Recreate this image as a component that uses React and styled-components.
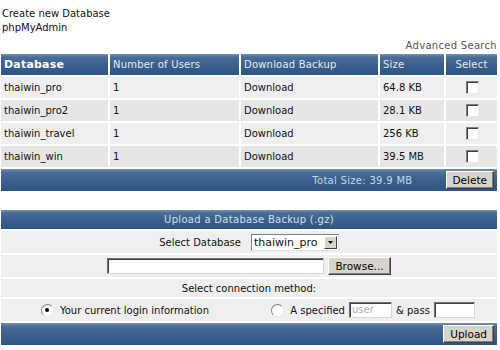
import React from "react";
import styled, { createGlobalStyle, css } from "styled-components";

const Global = createGlobalStyle`
  html, body {
    margin: 0;
    padding: 0;
    background: #fff;
  }
  body {
    font-family: "DejaVu Sans", Verdana, sans-serif;
    font-size: 10px;
    color: #111;
  }
`;

const rows = [
  { name: "thaiwin_pro", users: 1, size: "64.8 KB" },
  { name: "thaiwin_pro2", users: 1, size: "28.1 KB" },
  { name: "thaiwin_travel", users: 1, size: "256 KB" },
  { name: "thaiwin_win", users: 1, size: "39.5 MB" },
];

const App = () => (
  <Page>
    <Global />
    <Intro>
      <div>Create new Database</div>
      <div>phpMyAdmin</div>
    </Intro>
    <SearchLink>Advanced Search</SearchLink>

    <Grid>
      <Head bold>Database</Head>
      <Head>Number of Users</Head>
      <Head>Download Backup</Head>
      <Head>Size</Head>
      <Head center>Select</Head>
      {rows.map((r, i) => (
        <React.Fragment key={r.name}>
          <Cell alt={i % 2 === 1}>{r.name}</Cell>
          <Cell alt={i % 2 === 1}>{r.users}</Cell>
          <Cell alt={i % 2 === 1}>Download</Cell>
          <Cell alt={i % 2 === 1}>{r.size}</Cell>
          <Cell alt={i % 2 === 1} center>
            <Check />
          </Cell>
        </React.Fragment>
      ))}
      <Footer>
        <Total>Total Size: 39.9 MB</Total>
        <Button>Delete</Button>
      </Footer>
    </Grid>

    <Upload>
      <UploadHead>Upload a Database Backup (.gz)</UploadHead>
      <FormRow>
        <span>Select Database</span>
        <Select>
          <span>thaiwin_pro</span>
          <Arrow>
            <svg width="5" height="3" viewBox="0 0 5 3">
              <path d="M0 0h5L2.5 3z" fill="#000" />
            </svg>
          </Arrow>
        </Select>
      </FormRow>
      <FormRow>
        <TextBox width={217} />
        <Button>Browse...</Button>
      </FormRow>
      <FormRow short>Select connection method:</FormRow>
      <SplitRow>
        <Choice>
          <Radio checked />
          <span>Your current login information</span>
        </Choice>
        <Choice>
          <Radio />
          <span>A specified</span>
          <TextBox width={43} placeholder>user</TextBox>
          <span>&amp; pass</span>
          <TextBox width={41} />
        </Choice>
      </SplitRow>
      <Footer>
        <Button>Upload</Button>
      </Footer>
    </Upload>
  </Page>
);

export default App;

const Page = styled.div`
  width: 500px;
  padding: 7px 0 0 1px;
  box-sizing: border-box;
`;

const Intro = styled.div`
  padding-left: 1px;
  line-height: 14px;
`;

const SearchLink = styled.div`
  text-align: right;
  color: #555;
  padding-right: 3px;
  margin-top: 4px;
  line-height: 13px;
  letter-spacing: 0.3px;
`;

const Grid = styled.div`
  display: grid;
  grid-template-columns: 107px 129px 137px 64px 51px;
  gap: 2px;
  margin-top: 2px;
`;

const bar = css`
  background: linear-gradient(#7591b6 0%, #4a6d98 15%, #3a5f8c 55%, #2e5482 100%);
  color: #e4ebf4;
`;

const Head = styled.div`
  ${bar};
  height: 21px;
  line-height: 21px;
  padding: 0 3px;
  font-size: ${(p) => (p.bold ? "11px" : "10px")};
  font-weight: ${(p) => (p.bold ? "bold" : "normal")};
  color: ${(p) => (p.bold ? "#fff" : "#e4ebf4")};
  text-align: ${(p) => (p.center ? "center" : "left")};
  letter-spacing: 0.2px;
`;

const Cell = styled.div`
  height: 21px;
  line-height: 21px;
  padding: 0 3px;
  background: ${(p) => (p.alt ? "#e6e6e6" : "#efefef")};
  text-align: ${(p) => (p.center ? "center" : "left")};
  display: ${(p) => (p.center ? "flex" : "block")};
  align-items: center;
  justify-content: center;
`;

const Check = styled.span`
  width: 11px;
  height: 11px;
  background: #fff;
  border: 1px solid;
  border-color: #808080 #e8e8e8 #e8e8e8 #808080;
  box-shadow: inset 1px 1px 0 #404040;
  margin-left: 2px;
`;

const Footer = styled.div`
  ${bar};
  grid-column: 1 / -1;
  height: 22px;
  display: flex;
  align-items: center;
  justify-content: flex-end;
  padding-right: 3px;
  gap: 33px;
`;

const Total = styled.span`
  color: #c9d6e6;
  font-size: 10px;
  letter-spacing: 0.3px;
`;

const Button = styled.button`
  font-family: "DejaVu Sans", Verdana, sans-serif;
  font-size: 10.5px;
  color: #000;
  height: 18px;
  margin: 0;
  padding: 0 6px;
  background: #d8d4cc;
  border: 1px solid;
  border-color: #fff #404040 #404040 #fff;
  box-shadow: inset -1px -1px 0 #808080;
  border-radius: 0;
`;

const Upload = styled.div`
  display: grid;
  gap: 2px;
  width: 496px;
  margin-top: 19px;
`;

const UploadHead = styled.div`
  ${bar};
  height: 19px;
  line-height: 19px;
  text-align: center;
  color: #d6e0ec;
  letter-spacing: 0.3px;
`;

const FormRow = styled.div`
  background: #efefef;
  height: ${(p) => (p.short ? "18px" : "22px")};
  display: flex;
  align-items: center;
  justify-content: center;
  gap: 4px;
`;

const Select = styled.div`
  width: 88px;
  height: 17px;
  box-sizing: border-box;
  border: 1px solid;
  border-color: #808080 #e0e0e0 #e0e0e0 #808080;
  background: #fff;
  display: flex;
  align-items: center;
  justify-content: space-between;
  padding-left: 2px;
  margin-left: 6px;
  font-size: 11px;
`;

const Arrow = styled.span`
  width: 13px;
  height: 13px;
  margin-right: 1px;
  background: #d8d4cc;
  border: 1px solid;
  border-color: #fff #404040 #404040 #fff;
  box-sizing: border-box;
  display: flex;
  align-items: center;
  justify-content: center;
`;

const TextBox = styled.span`
  width: ${(p) => p.width}px;
  height: 16px;
  box-sizing: border-box;
  background: #fff;
  border: 1px solid;
  border-color: #707070 #d8d8d8 #d8d8d8 #707070;
  box-shadow: inset 1px 1px 0 #404040;
  color: #b0b0b0;
  line-height: 14px;
  padding-left: 2px;
`;

const SplitRow = styled.div`
  background: #efefef;
  height: 22px;
  display: grid;
  grid-template-columns: 1fr 1fr;
`;

const Choice = styled.div`
  display: flex;
  align-items: center;
  justify-content: center;
  gap: 4px;
`;

const Radio = styled.span`
  width: 11px;
  height: 11px;
  border-radius: 50%;
  background: #fff;
  border: 1px solid;
  border-color: #808080 #e8e8e8 #e8e8e8 #808080;
  display: flex;
  align-items: center;
  justify-content: center;
  margin-right: 2px;
  &::after {
    content: "";
    width: 4px;
    height: 4px;
    border-radius: 50%;
    background: ${(p) => (p.checked ? "#000" : "transparent")};
  }
`;
